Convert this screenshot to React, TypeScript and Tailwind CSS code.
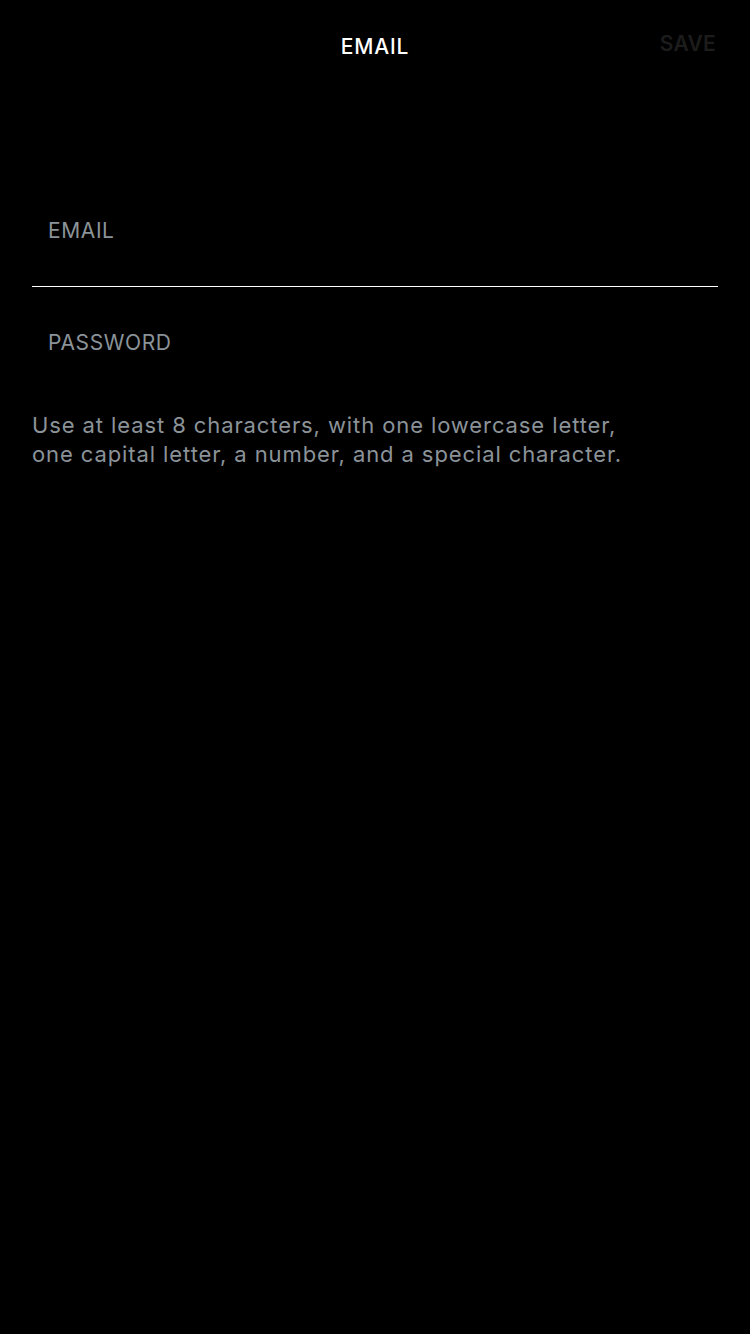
export default function App() {
  return (
    <div
      className="min-h-[1334px] w-[750px] bg-black"
      style={{ fontFamily: 'Inter, "Noto Sans", sans-serif' }}
    >
      <header className="relative flex h-[92px] items-start justify-center pt-[34px]">
        <h1 className="text-[21px] font-medium leading-[26px] tracking-[0.8px] text-white">EMAIL</h1>
        <button className="absolute right-[34px] top-[31px] text-[21px] font-semibold leading-[26px] tracking-[0.3px] text-[#1c1c1c]">
          SAVE
        </button>
      </header>

      <div className="mt-[126px] px-[32px]">
        <div className="border-b border-white pb-[42px] pl-[16px]">
          <span className="text-[21px] leading-[26px] tracking-[0.6px] text-[#8b9399]">EMAIL</span>
        </div>
        <div className="pl-[16px] pt-[43px]">
          <span className="text-[21px] leading-[26px] tracking-[0.6px] text-[#8b9399]">PASSWORD</span>
        </div>
        <p className="mt-[55px] text-[22px] leading-[29px] tracking-[0.9px] text-[#8b9399]">
          Use at least 8 characters, with one lowercase letter,
          <br />
          one capital letter, a number, and a special character.
        </p>
      </div>
    </div>
  );
}
